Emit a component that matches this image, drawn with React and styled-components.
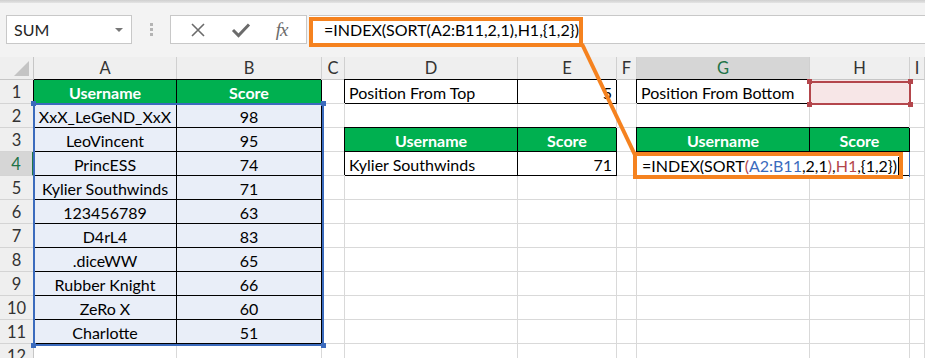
import React from 'react';
import styled, { createGlobalStyle } from 'styled-components';

const GlobalStyle = createGlobalStyle`
  body {
    margin: 0;
    font-family: Lato, "Open Sans", sans-serif;
    background: #fff;
  }
`;

const Page = styled.div`
  position: relative;
  width: 925px;
  height: 358px;
  overflow: hidden;
  background: #fff;
`;

/* ---------- formula bar ---------- */

const TopStrip = styled.div`
  height: 3px;
  background: linear-gradient(#cfcfcf, #e4e4e4);
`;

const FormulaBar = styled.div`
  display: flex;
  align-items: stretch;
  height: 54px;
  padding: 12px 0 13px 6px;
  box-sizing: border-box;
  background: #f3f3f3;
`;

const NameBox = styled.div`
  display: flex;
  align-items: center;
  justify-content: space-between;
  width: 126px;
  box-sizing: border-box;
  padding: 0 8px 0 7px;
  background: #fff;
  border: 1px solid #c8c8c8;
  font-size: 16px;
  color: #262626;
`;

const Caret = styled.span`
  width: 0;
  height: 0;
  border-left: 4px solid transparent;
  border-right: 4px solid transparent;
  border-top: 4px solid #777;
`;

const Grip = styled.div`
  width: 38px;
  display: flex;
  flex-direction: column;
  align-items: center;
  justify-content: center;
  gap: 2px;
`;

const Dot = styled.span`
  width: 3px;
  height: 3px;
  background: #b4b4b4;
`;

const IconBox = styled.div`
  display: flex;
  align-items: center;
  justify-content: space-around;
  width: 137px;
  box-sizing: border-box;
  padding: 0 6px;
  background: #fff;
  border: 1px solid #c8c8c8;
  color: #6b6b6b;
`;

const Fx = styled.span`
  font-family: "Liberation Serif", "DejaVu Serif", serif;
  font-style: italic;
  font-size: 19px;
  color: #6b6b6b;
  letter-spacing: -1px;
`;

const FormulaInput = styled.div`
  flex: 1;
  margin-left: 2px;
  display: flex;
  align-items: center;
  padding-left: 15px;
  background: #fff;
  border-top: 1px solid #c8c8c8;
  border-bottom: 1px solid #c8c8c8;
  font-size: 16px;
  color: #000;
  white-space: nowrap;
`;

/* ---------- grid ---------- */

const Sheet = styled.div`
  display: grid;
  grid-template-columns: 34px 143px 145px 23px 173px 99px 20px 173px 100px 1fr;
  grid-template-rows: 23px repeat(12, 24px);
  font-size: 16.5px;
`;

const Corner = styled.div`
  position: relative;
  background: #efefef;
  border-right: 1px solid #c6c6c6;
  border-bottom: 1px solid #c6c6c6;
  &::after {
    content: '';
    position: absolute;
    right: 4px;
    bottom: 3px;
    border-left: 15px solid transparent;
    border-bottom: 15px solid #c4c4c4;
  }
`;

const ColHead = styled.div`
  display: flex;
  align-items: center;
  justify-content: center;
  box-sizing: border-box;
  background: ${p => (p.$active ? '#d6d6d6' : '#efefef')};
  color: ${p => (p.$active ? '#217346' : '#333')};
  border-right: 1px solid #d0d0d0;
  border-bottom: 1px solid #c6c6c6;
`;

const RowHead = styled.div`
  display: flex;
  align-items: center;
  justify-content: center;
  box-sizing: border-box;
  background: ${p => (p.$active ? '#d6d6d6' : '#efefef')};
  color: ${p => (p.$active ? '#217346' : '#333')};
  border-right: ${p => (p.$active ? '2px solid #217346' : '1px solid #c6c6c6')};
  border-bottom: 1px solid #d4d4d4;
`;

const Cell = styled.div`
  display: flex;
  align-items: center;
  justify-content: ${p => p.$align || 'flex-start'};
  box-sizing: border-box;
  padding: 1px 4px 0;
  overflow: hidden;
  white-space: nowrap;
  font-size: 16px;
  background: ${p => (p.$head ? '#00b050' : p.$fill || '#fff')};
  color: ${p => (p.$head ? '#fff' : '#000')};
  font-weight: ${p => (p.$head ? 700 : 400)};
  border-right: 1px solid ${p => (p.$boxed ? '#000' : '#d9d9d9')};
  border-bottom: 1px solid ${p => (p.$boxed ? '#000' : '#d9d9d9')};
  box-shadow: ${p => (p.$boxed ? '-1px -1px 0 #000' : 'none')};
`;

/* ---------- overlays ---------- */

const RangeBox = styled.div`
  position: absolute;
  box-sizing: border-box;
  border: 2px solid ${p => p.$color};
  pointer-events: none;
`;

const Handle = styled.span`
  position: absolute;
  width: 5px;
  height: 5px;
  background: ${p => p.$color};
  ${p => (p.$top ? 'top: -4px;' : 'bottom: -4px;')}
  ${p => (p.$left ? 'left: -4px;' : 'right: -4px;')}
`;

const Callout = styled.div`
  position: absolute;
  box-sizing: border-box;
  border: 4px solid #f5821f;
`;

const CellEditor = styled(Callout)`
  display: flex;
  align-items: center;
  padding-left: 5px;
  background: #fff;
  font-size: 16px;
  color: #000;
  white-space: nowrap;
`;

const Cursor = styled.span`
  display: inline-block;
  width: 1px;
  height: 18px;
  margin-left: 1px;
  background: #000;
`;

const EditEdge = styled.div`
  position: absolute;
  left: 909px;
  top: 152px;
  width: 1px;
  height: 25px;
  background: #3b6bbd;
`;

const Connector = styled.svg`
  position: absolute;
  left: 0;
  top: 0;
  pointer-events: none;
`;

const Ref = styled.span`
  color: ${p => p.$c};
`;

const BLUE = '#3b6bbd';
const RED = '#b4464c';

const players = [
  ['XxX_LeGeND_XxX', 98],
  ['LeoVincent', 95],
  ['PrincESS', 74],
  ['Kylier Southwinds', 71],
  ['123456789', 63],
  ['D4rL4', 83],
  ['.diceWW', 65],
  ['Rubber Knight', 66],
  ['ZeRo X', 60],
  ['Charlotte', 51],
];

const letters = ['A', 'B', 'C', 'D', 'E', 'F', 'G', 'H', 'I'];

// what sits in each cell
const cellFor = (col, row) => {
  if (row === 1 && (col === 'A' || col === 'B')) {
    return { head: true, boxed: true, align: 'center', text: col === 'A' ? 'Username' : 'Score' };
  }
  if (row >= 2 && row <= 11 && (col === 'A' || col === 'B')) {
    const p = players[row - 2];
    return { boxed: true, fill: '#e9eef8', align: 'center', text: col === 'A' ? p[0] : p[1] };
  }
  if (row === 1 && col === 'D') return { boxed: true, text: 'Position From Top' };
  if (row === 1 && col === 'E') return { boxed: true, align: 'flex-end', text: '5' };
  if (row === 3 && (col === 'D' || col === 'G')) return { head: true, boxed: true, align: 'center', text: 'Username' };
  if (row === 3 && (col === 'E' || col === 'H')) return { head: true, boxed: true, align: 'center', text: 'Score' };
  if (row === 4 && col === 'D') return { boxed: true, text: 'Kylier Southwinds' };
  if (row === 4 && col === 'E') return { boxed: true, align: 'flex-end', text: '71' };
  if (row === 4 && (col === 'G' || col === 'H')) return { boxed: true };
  if (row === 1 && col === 'G') return { boxed: true, text: 'Position From Bottom' };
  if (row === 1 && col === 'H') return { fill: '#f7e6e7' };
  return {};
};

const Corners = ({ color }) => (
  <>
    <Handle $color={color} $top $left />
    <Handle $color={color} $top />
    <Handle $color={color} $left />
    <Handle $color={color} />
  </>
);

const App = () => {
  const rows = Array.from({ length: 12 }, (_, i) => i + 1);

  return (
    <Page>
      <GlobalStyle />
      <TopStrip />
      <FormulaBar>
        <NameBox>
          SUM
          <Caret />
        </NameBox>
        <Grip>
          <Dot />
          <Dot />
          <Dot />
        </Grip>
        <IconBox>
          <svg width="16" height="16" viewBox="0 0 16 16">
            <path d="M2 2 L14 14 M14 2 L2 14" stroke="#6b6b6b" strokeWidth="1.6" fill="none" />
          </svg>
          <svg width="20" height="16" viewBox="0 0 20 16">
            <path d="M2 8 L7.5 13.5 L18 2.5" stroke="#6b6b6b" strokeWidth="3" fill="none" />
          </svg>
          <Fx>fx</Fx>
        </IconBox>
        <FormulaInput>=INDEX(SORT(A2:B11,2,1),H1,{'{'}1,2{'}'})</FormulaInput>
      </FormulaBar>

      <Sheet>
        <Corner />
        {letters.map(l => (
          <ColHead key={l} $active={l === 'G'}>{l}</ColHead>
        ))}
        {rows.map(r => (
          <React.Fragment key={r}>
            <RowHead $active={r === 4}>{r}</RowHead>
            {letters.map(l => {
              const c = cellFor(l, r);
              return (
                <Cell key={l} $head={c.head} $boxed={c.boxed} $fill={c.fill} $align={c.align}>
                  {c.text}
                </Cell>
              );
            })}
          </React.Fragment>
        ))}
      </Sheet>

      {/* reference highlights */}
      <RangeBox $color={BLUE} style={{ left: 33, top: 103, width: 291, height: 243 }}>
        <Corners color={BLUE} />
      </RangeBox>
      <RangeBox $color={RED} style={{ left: 809, top: 81, width: 102, height: 24 }}>
        <Corners color={RED} />
      </RangeBox>

      {/* annotation */}
      <Connector width="925" height="358">
        <line x1="582" y1="44" x2="635" y2="155" stroke="#f5821f" strokeWidth="4" />
      </Connector>
      <Callout style={{ left: 309, top: 17, width: 274, height: 30 }} />
      <EditEdge />
      <CellEditor style={{ left: 633, top: 152, width: 270, height: 27 }}>
        =INDEX(SORT<Ref $c={RED}>(</Ref>
        <Ref $c={BLUE}>A2:B11</Ref>,2,1<Ref $c={RED}>)</Ref>,<Ref $c={RED}>H1</Ref>,{'{'}1,2{'}'})
        <Cursor />
      </CellEditor>
    </Page>
  );
};

export default App;
